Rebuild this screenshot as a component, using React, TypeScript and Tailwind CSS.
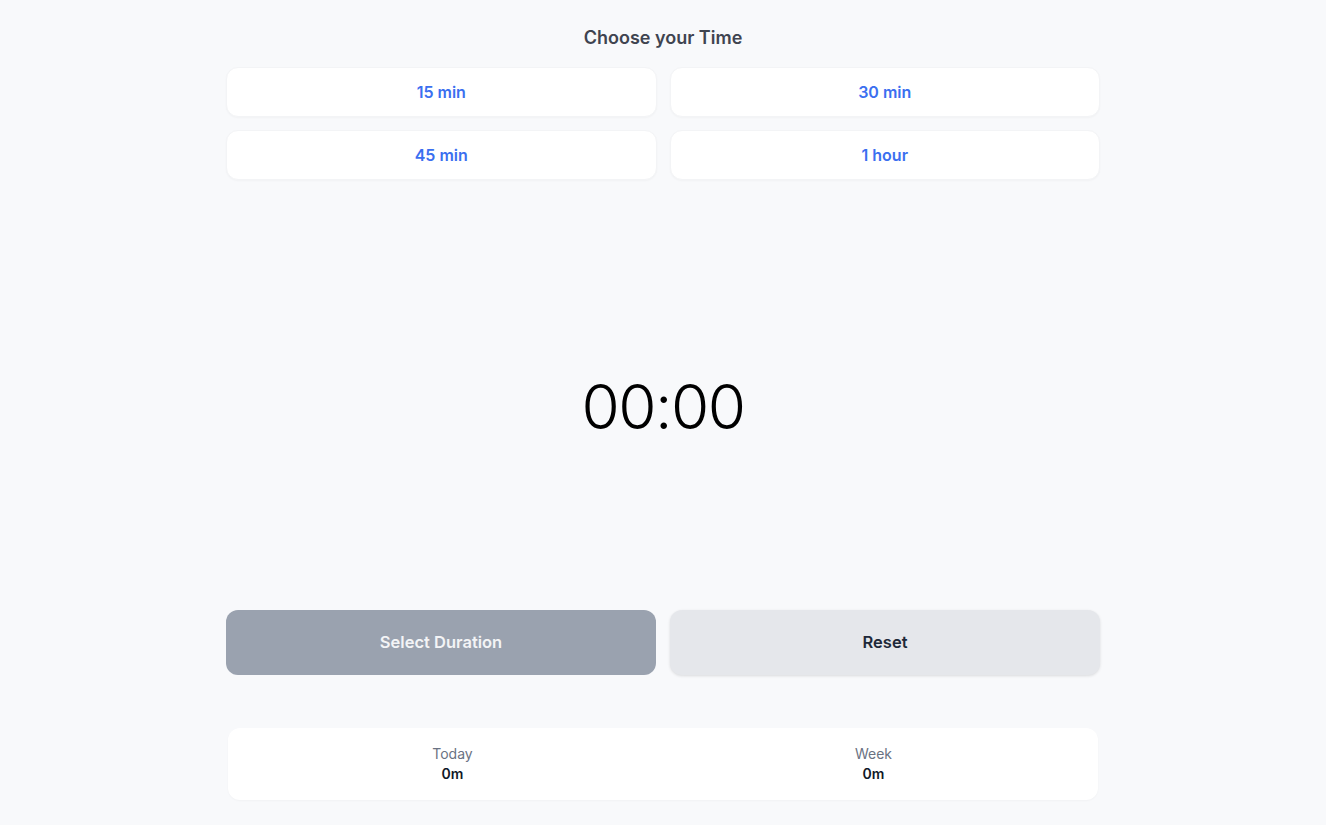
import React from "react";

export default function App() {
  const presets = ["15 min", "30 min", "45 min", "1 hour"];
  return (
    <div
      className="min-h-[825px] w-full bg-[#f8f9fb] flex justify-center"
      style={{ fontFamily: "Inter, 'Noto Sans', sans-serif" }}
    >
      <div className="w-[874px] flex flex-col pt-6">
        <h2 className="text-center text-[18px] leading-7 font-semibold text-[#3f4450]">
          Choose your Time
        </h2>
        <div className="mt-[15px] grid grid-cols-2 gap-x-[13px] gap-y-[13px]">
          {presets.map((p) => (
            <button
              key={p}
              className="h-[50px] rounded-xl bg-white border border-gray-100 shadow-[0_1px_2px_rgba(0,0,0,0.03)] text-[16px] font-semibold text-[#3b6ff0]"
            >
              {p}
            </button>
          ))}
        </div>
        <div className="mt-[197px] mb-[173px] h-[60px] flex items-center justify-center">
          <span className="text-[62px] leading-none font-light text-black tracking-tight">
            00:00
          </span>
        </div>
        <div className="grid grid-cols-2 gap-x-[14px]">
          <button className="h-[65px] rounded-xl bg-[#9aa2af] text-[16.5px] font-semibold text-gray-100">
            Select Duration
          </button>
          <button className="h-[65px] rounded-xl bg-[#e5e7eb] text-[16.5px] font-semibold text-gray-800 shadow-[0_1px_3px_rgba(0,0,0,0.12)]">
            Reset
          </button>
        </div>
        <div className="mt-[53px] mx-[2px] h-[72px] rounded-xl bg-white shadow-[0_1px_2px_rgba(0,0,0,0.03)] grid grid-cols-2 gap-x-5 px-6 items-center">
          <div className="flex flex-col items-center">
            <span className="text-[14px] leading-5 text-gray-500">Today</span>
            <span className="text-[14px] leading-5 font-semibold text-gray-900">0m</span>
          </div>
          <div className="flex flex-col items-center">
            <span className="text-[14px] leading-5 text-gray-500">Week</span>
            <span className="text-[14px] leading-5 font-semibold text-gray-900">0m</span>
          </div>
        </div>
      </div>
    </div>
  );
}
